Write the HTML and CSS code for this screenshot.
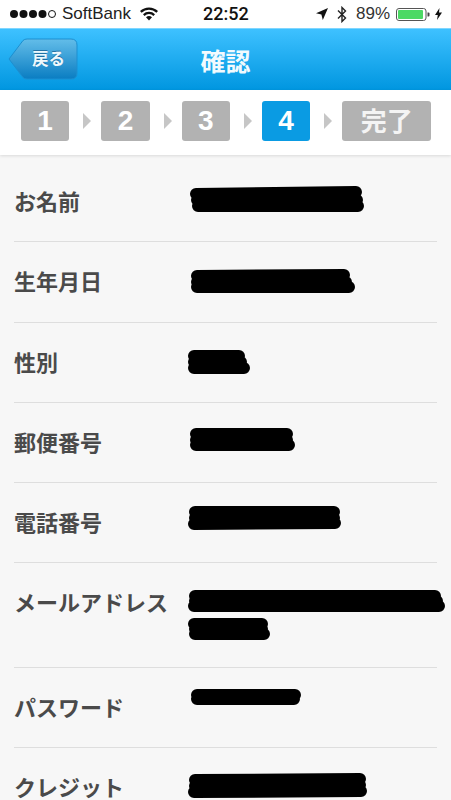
FILE: index.html
```html
<!DOCTYPE html>
<html lang="ja">
<head>
<meta charset="utf-8">
<title>確認</title>
<link rel="stylesheet" href="styles.css">
</head>
<body>
<div class="page">
  <header class="status">
    <div class="status-left">
      <svg class="signal" viewBox="0 0 48 10"><circle cx="5" cy="5" r="4"/><circle cx="14.5" cy="5" r="4"/><circle cx="24" cy="5" r="4"/><circle cx="33.5" cy="5" r="4"/><circle class="empty" cx="43" cy="5" r="3.5"/></svg>
      <span class="carrier">SoftBank</span>
      <svg class="wifi" viewBox="0 0 18 14"><path d="M9 13.5 6 10.3a4.4 4.4 0 0 1 6 0z"/><path d="M4.6 8.9 3 7.2a8.6 8.6 0 0 1 12 0l-1.6 1.7a6.3 6.3 0 0 0-8.8 0z"/><path d="M1.6 5.7 0 4a13 13 0 0 1 18 0l-1.600 1.700a10.700 10.700 0 0 0-14.800 0z"/></svg>
    </div>
    <span class="clock">22:52</span>
    <div class="status-right">
      <svg class="loc" viewBox="0 0 12 12"><path d="M12 0 0 5.200 5.400 6.600 6.800 12z"/></svg>
      <svg class="bt" viewBox="0 0 10 17"><path d="M1 4.500 8.500 12 5 15.500V1.500L8.500 5 1 12.500" fill="none" stroke="#222" stroke-width="1.400"/></svg>
      <span class="pct">89%</span>
      <svg class="batt" viewBox="0 0 34 13"><rect x=".5" y=".5" width="29.500" height="12" rx="2.500" fill="none" stroke="#555"/><rect x="2" y="2" width="25" height="9" rx="1" fill="#4cd964"/><path d="M31.500 4.500h1a1 1 0 0 1 1 1v2a1 1 0 0 1-1 1h-1z" fill="#444"/></svg>
      <svg class="bolt" viewBox="0 0 7 12"><path d="M4.500 0 0 7h2.800L2 12l5-7.400H4z"/></svg>
    </div>
  </header>

  <nav class="navbar">
    <a class="back">
      <svg class="back-shape" viewBox="0 0 70 42">
        <defs><linearGradient id="bk" x1="0" y1="0" x2="0" y2="1"><stop offset="0" stop-color="#63bde9"/><stop offset="1" stop-color="#0a7dc2"/></linearGradient></defs>
        <path d="M1 21 15 2.500Q16.500 1 19 1H63Q69 1 69 7V35Q69 41 63 41H19Q16.500 41 15 39.500Z" fill="url(#bk)" stroke="#1c8fd0"/>
      </svg>
      <span class="back-label">戻る</span>
    </a>
    <h1 class="title">確認</h1>
  </nav>

  <ol class="steps">
    <li class="step">1</li><li class="arrow"></li>
    <li class="step">2</li><li class="arrow"></li>
    <li class="step">3</li><li class="arrow"></li>
    <li class="step current">4</li><li class="arrow"></li>
    <li class="step done">完了</li>
  </ol>

  <main class="list">
    <div class="row"><div class="label">お名前</div><div class="value"><svg class="mark"><path d="M7 3 167 1M8 9 168 9M9 15 169 15"/></svg></div></div>
    <div class="row"><div class="label">生年月日</div><div class="value"><svg class="mark"><path d="M8 5 155 4M8 11 157 11M8 16 160 16"/></svg></div></div>
    <div class="row"><div class="label">性別</div><div class="value"><svg class="mark"><path d="M5 4 50 4M5 10 52 10M5 16 55 16"/></svg></div></div>
    <div class="row"><div class="label">郵便番号</div><div class="value"><svg class="mark"><path d="M7 2 98 2M7 8 98 8M7 13 100 13"/></svg></div></div>
    <div class="row"><div class="label">電話番号</div><div class="value"><svg class="mark"><path d="M6 0 145 0M6 6 145 6M5 12 146 11"/></svg></div></div>
    <div class="row"><div class="label">メールアドレス</div><div class="value"><svg class="mark"><path d="M6 4 246 4M6 9 248 9M5 14 250 14"/></svg><svg class="mark short"><path d="M5 7 73 7M6 12 73 12M6 17 75 17"/></svg></div></div>
    <div class="row"><div class="label">パスワード</div><div class="value"><svg class="mark"><path d="M8 -2 106 -2M8 2 105 2"/></svg></div></div>
    <div class="row"><div class="label">クレジット</div><div class="value"><svg class="mark"><path d="M6 3 171 2M6 9 171 8M5 15 172 14"/></svg></div></div>
  </main>
</div>
</body>
</html>
```
FILE: styles.css
```css
* { box-sizing: border-box; }
html, body { margin: 0; padding: 0; }
body { background: #f7f7f7; font-family: "Noto Sans CJK JP", "Liberation Sans", sans-serif; }
.page { height: 800px; overflow: hidden; }

.status {
  height: 28px;
  background: #fff;
  display: flex;
  align-items: center;
  padding: 0 9px 0 9px;
  position: relative;
  font-family: "Liberation Sans", sans-serif;
  font-size: 17px;
  color: #222;
}
.status-left { display: flex; align-items: center; }
.signal { width: 48px; height: 10px; fill: #111; margin-right: 5px; }
.signal .empty { fill: none; stroke: #111; stroke-width: 1; }
.wifi { width: 18px; height: 14px; margin-left: 9px; fill: #111; }
.clock {
  position: absolute;
  left: 203px;
  top: 4px;
  line-height: 20px;
  font-family: Roboto, sans-serif;
  font-weight: 500;
  font-size: 18px;
  color: #111;
}
.status-right { margin-left: auto; display: flex; align-items: center; }
.loc { width: 12px; height: 12px; fill: #111; margin-right: 9px; }
.bt { width: 10px; height: 17px; margin-right: 9px; }
.pct { margin-right: 6px; color: #333; }
.batt { width: 34px; height: 13px; margin-right: 5px; }
.bolt { width: 7px; height: 12px; fill: #111; }

.navbar {
  height: 62px;
  background: linear-gradient(#3ec1ff, #0096e0);
  border-top: 1px solid #7fd6ff;
  display: flex;
  align-items: center;
  justify-content: center;
  position: relative;
}
.back {
  position: absolute;
  left: 8px;
  top: 9px;
  width: 70px;
  height: 42px;
}
.back-shape { display: block; width: 70px; height: 42px; }
.back-label {
  position: absolute;
  left: 24px;
  top: 8px;
  line-height: 24px;
  font-size: 16.500px;
  font-weight: 700;
  color: #eef8fc;
  text-shadow: 0 -1px 0 rgba(0, 60, 110, .5);
}
.title {
  margin: 0;
  font-size: 25px;
  line-height: 32px;
  font-weight: 700;
  color: #f2fafe;
}

.steps {
  list-style: none;
  margin: 0;
  height: 65px;
  padding: 11px 0 0 21px;
  background: #fff;
  display: flex;
  align-items: flex-start;
  box-shadow: 0 1px 3px rgba(0, 0, 0, .12);
  position: relative;
}
.step {
  width: 48.300px;
  height: 40px;
  border-radius: 3px;
  background: #b2b2b2;
  color: #fff;
  display: flex;
  align-items: center;
  justify-content: center;
  font-family: "Liberation Sans", sans-serif;
  font-weight: 700;
  font-size: 28px;
}
.step.current { background: #0a9be3; }
.step.done {
  width: 89px;
  font-family: "Noto Sans CJK JP", sans-serif;
  font-size: 26px;
  font-weight: 700;
  line-height: 36px;
  padding-bottom: 2px;
  color: #f4f4f4;
}
.arrow {
  width: 0;
  height: 0;
  margin: 12px 10px 0 14px;
  border-left: 8px solid #c6c6c6;
  border-top: 8px solid transparent;
  border-bottom: 8px solid transparent;
}

.list { padding: 7px 14px 0; }
.row {
  display: flex;
  padding: 29px 0 25.300px;
  border-bottom: 1px solid #dedede;
}
.label {
  width: 175px;
  flex: none;
  margin-top: -3px;
  font-size: 22px;
  line-height: 25px;
  font-weight: 700;
  color: #4a4a4a;
  white-space: nowrap;
}
.value { flex: 1; min-width: 0; }
.mark {
  display: block;
  width: 100%;
  height: 25px;
  overflow: visible;
  fill: none;
  stroke: #000;
  stroke-width: 12;
  stroke-linecap: round;
  stroke-linejoin: round;
}
.mark.short { height: 24px; }
```
